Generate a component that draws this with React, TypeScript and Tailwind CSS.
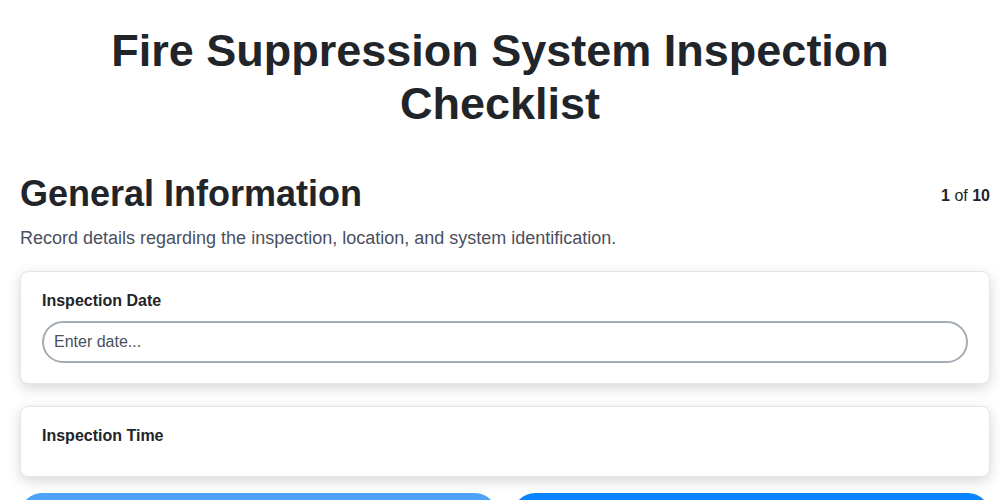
export default function App() {
  return (
    <div className="min-h-screen bg-white font-['Liberation_Sans',Arial,sans-serif] text-[#212529]">
      <h1 className="px-5 pt-6 text-center text-[45px] font-bold leading-[53px]">
        Fire Suppression System Inspection
        <br />
        Checklist
      </h1>

      <div className="pl-5 pr-2.5">
        <div className="mt-[42px] flex items-start justify-between">
          <h2 className="text-[36px] font-bold leading-[44px]">General Information</h2>
          <div className="pt-3 text-base">
            <span className="font-bold">1</span> of <span className="font-bold">10</span>
          </div>
        </div>
        <p className="mt-2.5 text-lg leading-6 text-[#4a5060]">
          Record details regarding the inspection, location, and system identification.
        </p>

        <div className="mt-[21px] space-y-[22px]">
          <div className="rounded-lg border border-[#e5e5ea] bg-white px-[21px] pb-5 pt-[19px] shadow-[0_4px_14px_rgba(0,0,0,0.16)]">
            <label className="block text-base font-bold leading-5">Inspection Date</label>
            <input
              className="mt-2.5 h-[42px] w-full rounded-full border-2 border-[#a4acb4] px-2.5 text-base text-[#212529] placeholder:text-[#4a5060] outline-none"
              placeholder="Enter date..."
            />
          </div>
          <div className="h-[71px] rounded-lg border border-[#e5e5ea] bg-white px-[21px] pt-[19px] shadow-[0_4px_14px_rgba(0,0,0,0.16)]">
            <label className="block text-base font-bold leading-5">Inspection Time</label>
          </div>
        </div>

        <div className="mt-4 grid grid-cols-2 gap-4">
          <button className="h-11 rounded-full bg-[#4da3f7] text-white">Previous</button>
          <button className="h-11 rounded-full bg-[#0a84ff] text-white">Next</button>
        </div>
      </div>
    </div>
  );
}
